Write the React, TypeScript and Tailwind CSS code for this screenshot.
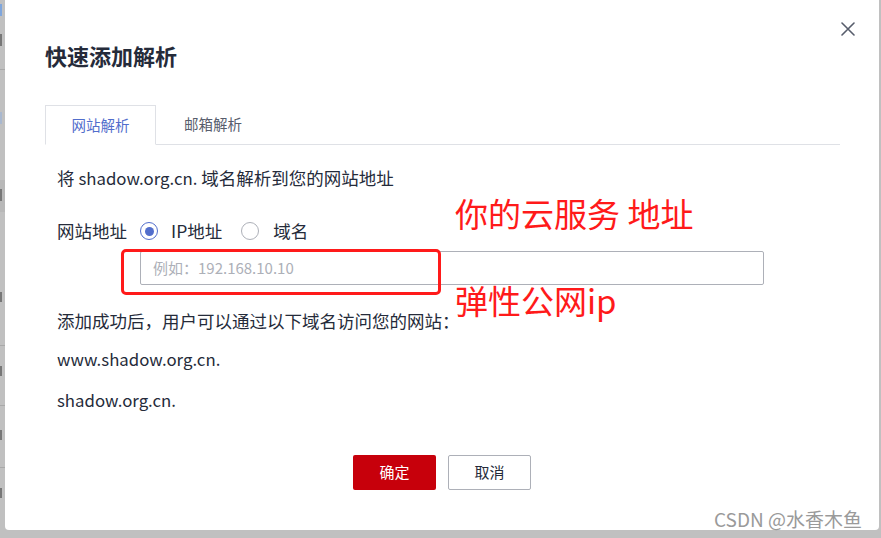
import React from "react";

const font = { fontFamily: '"Noto Sans CJK SC", "Noto Sans", sans-serif' };

export default function App() {
  return (
    <div className="relative w-[881px] h-[538px] overflow-hidden bg-[#c0c0c0] flex" style={font}>
      {/* left sliver of the page behind */}
      <div className="w-[5px] h-full overflow-hidden flex flex-col">
        <div className="h-[70px] border-b border-[#a9a9a9] flex flex-col pt-[4px] gap-[18px]">
          <div className="w-[2px] h-[12px] bg-[#7fa6dc]" />
          <div className="w-[2px] h-[12px] bg-[#777]" />
        </div>
        <div className="h-[110px] pt-[42px]">
          <div className="w-[2px] h-[12px] bg-[#a9b8cf]" />
        </div>
        <div className="h-[32px] bg-[#b8b8b8] pt-[9px]">
          <div className="w-[2px] h-[12px] bg-[#777]" />
        </div>
        <div className="h-[133px] pt-[80px]">
          <div className="w-[2px] h-[10px] bg-[#777]" />
        </div>
        <div className="h-[60px] border-t border-[#a9a9a9] pt-[20px]">
          <div className="w-[2px] h-[10px] bg-[#777]" />
        </div>
        <div className="h-[62px] border-t border-[#a9a9a9] pt-[24px]">
          <div className="w-[2px] h-[10px] bg-[#777]" />
        </div>
        <div className="h-[60px] border-t border-[#a9a9a9] pt-[20px]">
          <div className="w-[2px] h-[10px] bg-[#777]" />
        </div>
      </div>

      {/* dialog */}
      <div className="relative w-[874px] h-[530px] bg-white rounded-b-[4px] pl-[40px] pr-[39px] flex flex-col">
        <div className="pt-[40px] h-[70px] text-[22px] leading-[30px] font-semibold text-[#252b3a]">快速添加解析</div>

        <button className="absolute top-[22px] right-[24px] w-[14px] h-[14px] text-[#575d6c]">
          <svg viewBox="0 0 14 14" className="w-[14px] h-[14px]" fill="none" stroke="currentColor" strokeWidth="1.6" strokeLinecap="round">
            <path d="M1 1 L13 13 M13 1 L1 13" />
          </svg>
        </button>

        {/* tabs */}
        <div className="mt-[35px] h-[40px] border-b border-[#dfe1e6] flex items-end">
          <div className="w-[111px] h-[40px] -mb-px border border-[#dfe1e6] border-b-white bg-white flex items-center justify-center text-[14.5px] text-[#526ecc]">
            网站解析
          </div>
          <div className="h-[40px] pl-[28px] flex items-center text-[14.5px] text-[#575d6c]">邮箱解析</div>
        </div>

        <div className="pl-[12px] flex flex-col text-[17.5px] text-[#252b3a]">
          <div className="mt-[21px] leading-[24px]">
            将 <span className="text-[16.8px]">shadow.org.cn.</span> 域名解析到您的网站地址
          </div>

          <div className="mt-[29px] h-[24px] leading-[24px] flex items-center">
            <span>网站地址</span>
            <span className="ml-[13px] w-[18px] h-[18px] rounded-full border border-[#526ecc] flex items-center justify-center">
              <span className="w-[9px] h-[9px] rounded-full bg-[#526ecc]" />
            </span>
            <span className="ml-[13px]">IP地址</span>
            <span className="ml-[19px] w-[18px] h-[18px] rounded-full border border-[#adb0b8]" />
            <span className="ml-[14px]">域名</span>
          </div>

          <div className="mt-[8px] ml-[83px] w-[624px] h-[34px] border border-[#adb0b8] rounded-[2px] flex items-center pl-[12px] text-[15px] text-[#adb0b8]">
            例如：192.168.10.10
          </div>

          <div className="mt-[24px] leading-[24px]">添加成功后，用户可以通过以下域名访问您的网站：</div>
          <div className="mt-[14px] leading-[24px] text-[16.8px]">www.shadow.org.cn.</div>
          <div className="mt-[17px] leading-[24px] text-[16.8px]">shadow.org.cn.</div>
        </div>

        <div className="mt-[43px] flex justify-center gap-[12px] pr-[1px]">
          <button className="w-[83px] h-[35px] rounded-[2px] bg-[#c7000b] text-white text-[15px]">确定</button>
          <button className="w-[83px] h-[35px] rounded-[2px] border border-[#adb0b8] bg-white text-[#252b3a] text-[15px]">取消</button>
        </div>

        {/* red annotations */}
        <div className="absolute left-[116px] top-[249px] w-[320px] h-[46px] border-[3px] border-[#ff1a1a] rounded-[5px]" />
        <div className="absolute left-[450px] top-[192px] text-[33px] leading-[42px] text-[#ff1a1a]">你的云服务 地址</div>
        <div className="absolute left-[450px] top-[279px] text-[33px] leading-[42px] text-[#ff1a1a]">弹性公网ip</div>
      </div>

      <div className="w-[2px] h-full bg-[#c0c0c0]" />

      <div className="absolute left-[714px] top-[505px] text-[19px] leading-[28px] text-[#9a9a9a]">CSDN @水香木鱼</div>
    </div>
  );
}
